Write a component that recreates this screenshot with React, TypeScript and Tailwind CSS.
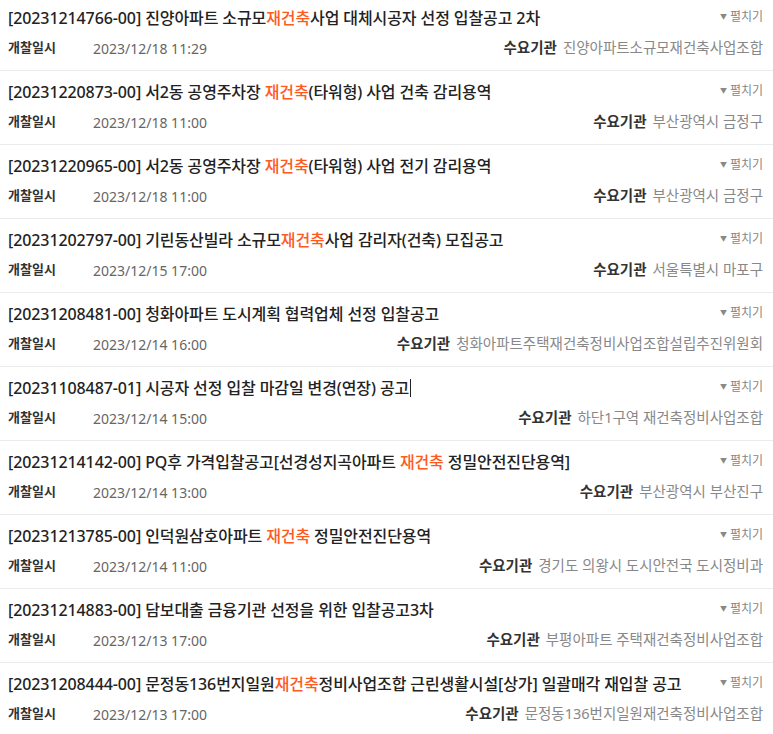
import React from 'react';

type Bid = {
  no: string;
  title: React.ReactNode;
  date: string;
  agency: string;
  caret?: boolean;
};

const Hi = ({ children }: { children: React.ReactNode }) => (
  <span className="text-[#ff5a1e]">{children}</span>
);

const BIDS: Bid[] = [
  { no: '20231214766-00', title: <>진양아파트 소규모<Hi>재건축</Hi>사업 대체시공자 선정 입찰공고 2차</>, date: '2023/12/18 11:29', agency: '진양아파트소규모재건축사업조합' },
  { no: '20231220873-00', title: <>서2동 공영주차장 <Hi>재건축</Hi>(타워형) 사업 건축 감리용역</>, date: '2023/12/18 11:00', agency: '부산광역시 금정구' },
  { no: '20231220965-00', title: <>서2동 공영주차장 <Hi>재건축</Hi>(타워형) 사업 전기 감리용역</>, date: '2023/12/18 11:00', agency: '부산광역시 금정구' },
  { no: '20231202797-00', title: <>기린동산빌라 소규모<Hi>재건축</Hi>사업 감리자(건축) 모집공고</>, date: '2023/12/15 17:00', agency: '서울특별시 마포구' },
  { no: '20231208481-00', title: <>청화아파트 도시계획 협력업체 선정 입찰공고</>, date: '2023/12/14 16:00', agency: '청화아파트주택재건축정비사업조합설립추진위원회' },
  { no: '20231108487-01', title: <>시공자 선정 입찰 마감일 변경(연장) 공고</>, date: '2023/12/14 15:00', agency: '하단1구역 재건축정비사업조합', caret: true },
  { no: '20231214142-00', title: <>PQ후 가격입찰공고[선경성지곡아파트 <Hi>재건축</Hi> 정밀안전진단용역]</>, date: '2023/12/14 13:00', agency: '부산광역시 부산진구' },
  { no: '20231213785-00', title: <>인덕원삼호아파트 <Hi>재건축</Hi> 정밀안전진단용역</>, date: '2023/12/14 11:00', agency: '경기도 의왕시 도시안전국 도시정비과' },
  { no: '20231214883-00', title: <>담보대출 금융기관 선정을 위한 입찰공고3차</>, date: '2023/12/13 17:00', agency: '부평아파트 주택재건축정비사업조합' },
  { no: '20231208444-00', title: <>문정동136번지일원<Hi>재건축</Hi>정비사업조합 근린생활시설[상가] 일괄매각 재입찰 공고</>, date: '2023/12/13 17:00', agency: '문정동136번지일원재건축정비사업조합' },
];

const BidRow = ({ bid }: { bid: Bid }) => (
  <li className="border-b border-[#ebebeb] pl-[8px] pr-[10px] pt-[10px] pb-[12px]">
    <div className="flex items-start justify-between">
      <div className="h-[22px] leading-[22px] text-[16px] tracking-[-0.1px] font-medium text-[#222] whitespace-nowrap flex items-center">
        <span>[{bid.no}] {bid.title}</span>
        {bid.caret && <span className="ml-[1px] inline-block w-[1px] h-[18px] bg-[#222]" />}
      </div>
      <button className="flex items-center gap-[3px] text-[12px] text-[#888] leading-[16px] mt-[2px] shrink-0">
        <span className="text-[7px]">▼</span>
        <span>펼치기</span>
      </button>
    </div>
    <div className="mt-[9px] flex items-center justify-between h-[20px] whitespace-nowrap">
      <div className="flex items-center">
        <span className="w-[85px] text-[13px] font-bold text-[#333]">개찰일시</span>
        <span className="text-[14px] text-[#666]">{bid.date}</span>
      </div>
      <div className="flex items-center gap-[6px] text-[14.5px]">
        <span className="font-bold text-[#333]">수요기관</span>
        <span className="text-[#888]">{bid.agency}</span>
      </div>
    </div>
  </li>
);

export default function App() {
  return (
    <div
      className="w-[773px] h-[734px] overflow-hidden bg-white"
      style={{ fontFamily: '"Noto Sans", "Noto Sans CJK KR", sans-serif' }}
    >
      <ul className="-mt-[3px]">
        {BIDS.map((bid) => (
          <BidRow key={bid.no} bid={bid} />
        ))}
      </ul>
    </div>
  );
}
